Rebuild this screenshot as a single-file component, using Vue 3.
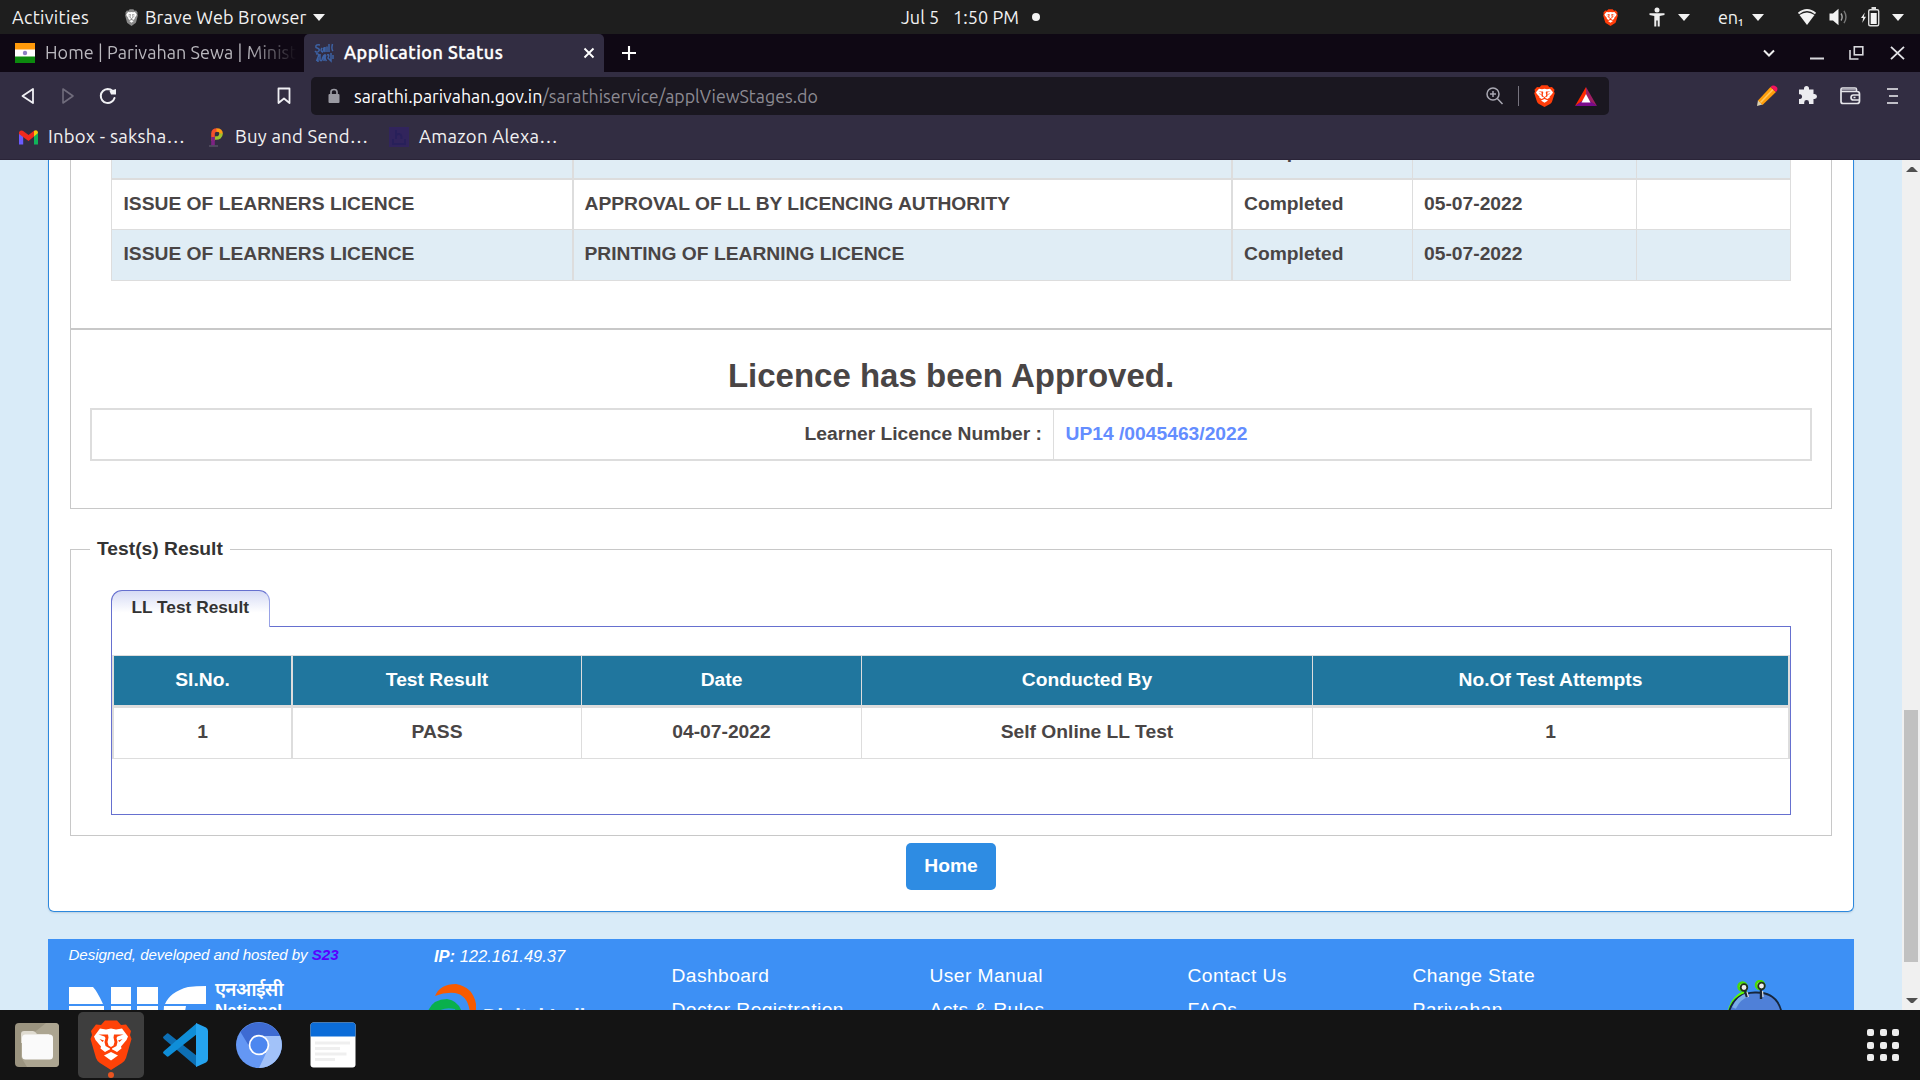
<script setup>
const stages = [
  ['', '', 'Completed', '', ''],
  ['ISSUE OF LEARNERS LICENCE', 'APPROVAL OF LL BY LICENCING AUTHORITY', 'Completed', '05-07-2022', ''],
  ['ISSUE OF LEARNERS LICENCE', 'PRINTING OF LEARNING LICENCE', 'Completed', '05-07-2022', ''],
]
const testHead = ['Sl.No.', 'Test Result', 'Date', 'Conducted By', 'No.Of Test Attempts']
const testRow = ['1', 'PASS', '04-07-2022', 'Self Online LL Test', '1']
const links = [
  ['Dashboard', 'Doctor Registration'],
  ['User Manual', 'Acts & Rules'],
  ['Contact Us', 'FAQs'],
  ['Change State', 'Parivahan'],
]
</script>

<template>
  <div class="screen">
    <svg class="defs" width="0" height="0" aria-hidden="true">
      <symbol id="lion" viewBox="0 0 42 50" preserveAspectRatio="none">
        <path fill="currentColor" d="M11 5 15 0.5H27L31 5 36 4.5 41 11 40 15 41.5 19 36 38Q35 41 32 43L21 50 10 43Q7 41 6 38L.5 19 2 15 1 11 6 4.5Z" />
        <path class="lion-face" d="M10 8.5 16 9.5 21 8.5 26 9.5 32 8.5 38 16.5 36.5 20 31 26.5 31.500 28.500 27 32 22.500 29.500H19.500L15 32 10.500 28.500 11 26.500 5.500 20 4 16.500Z" />
        <path class="lion-face" d="M21 32 28 35.500 21 40.500 14 35.500Z" />
        <path fill="currentColor" d="M8.500 14.500 18 14.500 18.500 17.500 17.500 22 18.500 25.500 21 27 23.500 25.500 24.500 22 23.500 17.500 24 14.500 33.500 14.500 27.500 16.500 26.500 18 27.500 22 26.500 26 22 28.500V31H20V28.500L15.500 26 14.500 22 15.500 18 14.500 16.500ZM9.500 19 14 20.500 12.500 22ZM32.500 19 28 20.500 29.500 22Z" />
      </symbol>
    </svg>

    <header class="sysbar">
      <div class="sys-left">
        <span class="activities">Activities</span>
        <svg class="lion grey" width="13" height="17"><use href="#lion" /></svg>
        <span class="appname">Brave Web Browser</span>
        <i class="tri"></i>
      </div>
      <div class="sys-mid">
        <span class="day">Jul 5</span><span class="time">1:50 PM</span><i class="dot"></i>
      </div>
      <div class="sys-right">
        <svg class="lion red i-brave" width="15" height="17"><use href="#lion" /></svg>
        <svg class="i-acc" width="16" height="20" viewBox="0 0 16 20" fill="#eee"><circle cx="8" cy="3" r="2.500" /><path d="M0.500 6.200H15.500V8L10.700 9V19.500H8.700V13.500H7.300V19.500H5.300V9L.5 8Z" /></svg>
        <i class="tri t1"></i>
        <span class="lang">en₁</span>
        <i class="tri t2"></i>
        <svg class="i-wifi" width="20" height="18" viewBox="0 0 20 18"><path d="M1.500 5.500Q10-1.500 18.500 5.500" fill="none" stroke="#eee" stroke-width="1.800" /><path d="M2.500 7Q10 2 17.500 7L10 17Z" fill="#f2f2f2" /></svg>
        <svg class="i-vol" width="20" height="18" viewBox="0 0 20 18"><path d="M.5 5.500H4L9.500.8V17.200L4 12.500H.5Z" fill="#f2f2f2" /><path d="M12 5.500Q14.300 9 12 12.500" fill="none" stroke="#aaa" stroke-width="1.400" /><path d="M15 2.800Q19 9 15 15.200" fill="none" stroke="#777" stroke-width="1.400" /></svg>
        <svg class="i-bat" width="19" height="20" viewBox="0 0 19 20"><path d="M3.800 5.500 0 11H2.200L1.200 16 5 9.700H2.800Z" fill="#eee" /><rect x="7.700" y="2.700" width="10" height="16" rx="1.500" fill="none" stroke="#ddd" stroke-width="1.400" /><rect x="10.500" y="0" width="4.500" height="2.500" fill="#ddd" /><rect x="9.700" y="6" width="6" height="11" fill="#f4f4f4" /></svg>
        <i class="tri t3"></i>
      </div>
    </header>

    <div class="tabstrip">
      <div class="tab idle">
        <svg width="20" height="20"><rect width="20" height="7" fill="#ff9a0a" /><rect y="6.500" width="20" height="7.500" fill="#fff" /><rect y="13.500" width="20" height="6.500" fill="#0c8a0e" /><circle cx="10" cy="10" r="2.200" fill="#8d7fc4" /></svg>
        <span>Home | Parivahan Sewa | Ministry</span>
      </div>
      <div class="tab active">
        <svg width="20" height="20" viewBox="0 0 20 20" fill="none" stroke="#3d62a4" stroke-width="1.500"><path d="M6 2Q1 1 2 4.500 7 6 4.500 8.500 2.500 10 1 8M8 5Q6 8 8.500 9 10.500 7 9.500 4.500L11 9V4M13 9V3.500M15 1V9M18.500 1Q17 6 19 8M2 11Q5 10 4.500 13L2.500 18M6 11V17Q8 19 8.500 15L10 12V18M12 12Q10 15 12.500 18M13 12Q16 11 14 15L17 18V10M11 11V14M19 12V16M4 15V19" /></svg>
        <span>Application Status</span>
        <svg class="close" width="12" height="12" viewBox="0 0 12 12"><path d="M1.500 1.500 10.500 10.500M10.500 1.500 1.500 10.500" stroke="#fff" stroke-width="1.900" /></svg>
      </div>
      <svg class="plus" width="16" height="16" viewBox="0 0 16 16"><path d="M8 1V15M1 8H15" stroke="#fff" stroke-width="2.100" /></svg>
      <div class="winctl">
        <svg width="12" height="14" viewBox="0 0 12 14"><path d="M1 4.500 6 9.500 11 4.500" fill="none" stroke="#eee" stroke-width="2" /></svg>
        <svg width="14" height="14"><path d="M0 12.500H14" stroke="#d8d8dc" stroke-width="2" /></svg>
        <svg width="15" height="14" fill="none" stroke="#d8d8dc" stroke-width="1.600"><rect x="5.300" y=".8" width="8.500" height="8" /><path d="M1 4V13H9.500" /></svg>
        <svg width="15" height="14"><path d="M1 .8 14 13.200M14 .8 1 13.200" stroke="#e4e4e8" stroke-width="1.800" /></svg>
      </div>
    </div>

    <div class="toolbar">
      <div class="navrow">
        <svg class="n-back" width="15" height="18"><path d="M13 2V16L2.500 9Z" fill="none" stroke="#f0f0f4" stroke-width="1.800" stroke-linejoin="round" /></svg>
        <svg class="n-fwd" width="15" height="18"><path d="M2 2V16L12 9Z" fill="none" stroke="#706c7c" stroke-width="1.600" stroke-linejoin="round" /></svg>
        <svg class="n-rel" width="19" height="18"><path d="M13.800 4Q11.500 2 8.500 2A7 7 0 1 0 15.500 11" fill="none" stroke="#f0f0f4" stroke-width="2" stroke-linecap="round" /><path d="M10.500 4 17 2V7.500H12Z" fill="#f0f0f4" /></svg>
        <svg class="n-book" width="14" height="18"><path d="M1.500 1.500H12.500V16L7 11.500 1.500 16Z" fill="none" stroke="#f0f0f4" stroke-width="1.800" stroke-linejoin="round" /></svg>
        <div class="urlbar">
          <svg class="u-lock" width="12" height="16"><rect x=".5" y="6" width="11" height="9" rx="1" fill="#9a9aa2" /><path d="M3 7V4Q3 1.500 6 1.500T9 4V7" fill="none" stroke="#9a9aa2" stroke-width="1.700" /></svg>
          <span class="url"><b>sarathi.parivahan.gov.in</b><span>/sarathiservice/applViewStages.do</span></span>
          <svg class="u-zoom" width="18" height="18" fill="none" stroke="#a9a8b2" stroke-width="1.500"><circle cx="7" cy="7" r="6" /><path d="M11.300 11.500 16.500 17M7 4V10M4 7H10" /></svg>
          <i class="u-sep"></i>
          <svg class="lion red" width="21" height="22"><use href="#lion" /></svg>
          <svg class="u-bat" width="22" height="19" viewBox="0 0 22 19"><path d="M11 0 0 19 11 12Z" fill="#ff2a00" /><path d="M11 0 22 19 11 12Z" fill="#9e1f63" /><path d="M0 19H22L11 11Z" fill="#7a0a8c" /><path d="M11 7 6.500 15.500H15.500Z" fill="#fff" /></svg>
        </div>
        <div class="exts">
          <svg width="22" height="22" viewBox="0 0 22 22"><path d="M1 21 2 15 6.500 19.500Z" fill="#d8d0b0" /><path d="M2 15.500 14.500 2 20 7 6.500 20Z" fill="#ff9d0a" /><path d="M4.500 17.500 17 4.500" stroke="#ffc860" stroke-width="1.600" /><path d="M14.500 2Q17-.5 20 1.500T20 7Z" fill="#f4145c" /></svg>
          <svg width="20" height="20" viewBox="0 0 20 20" fill="#ececf0"><path d="M1 4.500H6V3.500A2.500 2.500 0 0 1 11 3.500V4.500H15.500V9H16.500A2.400 2.400 0 0 1 16.500 14H15.500V19H11V17.500A2.400 2.400 0 0 0 6.200 17.500V19H1V14H2.200A2.400 2.400 0 0 0 2.200 9.300H1Z" /></svg>
          <svg width="21" height="18" viewBox="0 0 21 18" fill="none" stroke="#e6e6ea" stroke-width="1.700"><path d="M16.500 5V2.500Q16.500 1 15 1H2.500Q1 1 1 2.500V14.500Q1 16.500 3 16.500H17Q19.500 16.500 19.500 14V7Q19.500 4.500 17 4.500H1.500M19.500 8H13.500Q11 8 11 10.500T13.500 13H19.500M13.500 10.500H15.500" /><path d="M2 2.500H16" stroke="#9d9aa8" /></svg>
          <svg width="12" height="18"><path d="M0 2H11M2 9H11M0 16H11" stroke="#f0f0f4" stroke-width="1.700" /></svg>
        </div>
      </div>
      <div class="bookmarks">
        <svg class="b1" width="19" height="15" viewBox="0 0 19 15"><path d="M0 2V14.500H4.200V6Z" fill="#6b5bff" /><path d="M15 6V14.500H19V2Z" fill="#10b45a" /><path d="M0 2.200Q1-.5 3.800.8L9.500 5 15 .8V6.500L9.500 11 0 4Z" fill="#f02b1d" /><path d="M15 .8Q19-.8 19 3L15 6.500Z" fill="#fbc80a" /></svg>
        <span class="bt1">Inbox - saksha…</span>
        <svg class="b2" width="15" height="19" viewBox="0 0 15 19" fill="none" stroke-width="3.600"><path d="M4 13V5.500Q4 2 8 2" stroke="#f4502c" /><path d="M7.500 2Q12.500 2 12 6" stroke="#ff9b12" /><path d="M12 5.500Q12 10.500 6 10" stroke="#9ec22d" /><path d="M4 9V17.500" stroke="#7d2284" /><path d="M0 18H9" stroke="#575264" stroke-width="1.500" /></svg>
        <span class="bt2">Buy and Send…</span>
        <svg class="b3" width="20" height="20"><rect width="20" height="20" fill="#31245c" /><path d="M7 3V12M7 8Q13 5 12.500 12M4 12V17H16V12" fill="none" stroke="#28205a" stroke-width="2" /></svg>
        <span class="bt3">Amazon Alexa…</span>
      </div>
    </div>

    <div class="viewport">
      <main class="page">
        <section class="card">
          <div class="box stages-box">
            <div class="stages">
              <div v-for="(row, r) in stages" :key="r" class="srow" :class="'s' + r">
                <div v-for="(c, i) in row" :key="i">{{ c }}</div>
              </div>
            </div>
          </div>
          <div class="box approved">
            <h1>Licence has been Approved.</h1>
            <div class="licence">
              <div class="l-key">Learner Licence Number :</div>
              <div class="l-val">UP14 /0045463/2022</div>
            </div>
          </div>
          <div class="box results">
            <div class="legend">Test(s) Result</div>
            <div class="lltab">LL Test Result</div>
            <div class="panel">
              <div class="trow thead"><div v-for="c in testHead" :key="c">{{ c }}</div></div>
              <div class="trow tbody"><div v-for="(c, i) in testRow" :key="i">{{ c }}</div></div>
            </div>
          </div>
          <button class="home">Home</button>
        </section>

        <footer class="footer">
          <div class="f-nic">
            <p>Designed, developed and hosted by <b>S23</b></p>
            <div class="nic">
              <svg width="137" height="36" viewBox="0 0 137 36" fill="#fff"><path d="M0 1H24Q28 5 34 18H0ZM42 1H62V18H42ZM68 1H89V18H68ZM137 0V18H96Q101 6 119 1 127 0 137 0Z" /><path d="M0 20H35V36H0ZM42 20H62V36H42ZM68 20H89V36H68ZM95 20H117L114 36H94Z" /></svg>
              <div class="nic-text"><span class="hi">एनआईसी</span><span class="en">National</span></div>
            </div>
          </div>
          <div class="f-ip">
            <p><b>IP:</b> 122.161.49.37</p>
            <div class="digital">
              <svg width="48" height="40" viewBox="0 0 48 40"><path d="M7 12Q12 0 28 0 45 3 48 20V40H42Q44 12 27 9 17 8 7 12Z" fill="#f85a00" /><path d="M0 27Q5 15 19 15 33 17 35 34L0 38Z" fill="#09b04c" /><path d="M7 30Q15 22 27 25L31 38H2Z" fill="#2696cf" /></svg>
              <span>Digital India</span>
            </div>
          </div>
          <nav v-for="(col, i) in links" :key="i" class="f-col" :class="'c' + i">
            <a v-for="l in col" :key="l">{{ l }}</a>
          </nav>
          <svg class="bug" width="60" height="50" viewBox="0 0 60 50"><path d="M3 50Q2 18 22 12" fill="none" stroke="#5bff00" stroke-width="4" /><path d="M4 50V32Q9 13 30 12.500T56 30V50Z" fill="#4f80d8" stroke="#17263c" stroke-width="1.800" /><path d="M9 28Q14 17 23 15" fill="none" stroke="#79abe8" stroke-width="4" /><circle cx="17.500" cy="6.500" r="4" fill="#cfe8a0" stroke="#49dc08" stroke-width="2.500" /><circle cx="19" cy="7.500" r="3.300" fill="#eee" stroke="#22301a" stroke-width="1.800" /><circle cx="35" cy="5" r="4" fill="#cfe8a0" stroke="#49dc08" stroke-width="2.500" /><circle cx="36.500" cy="6" r="3.300" fill="#eee" stroke="#22301a" stroke-width="1.800" /><path d="M20 11 22 17M36 9.500V19" stroke="#1c2533" stroke-width="2.400" /><path d="M22 12 23.500 17M37.500 11 38 17" stroke="#ddd" stroke-width="1.200" /></svg>
        </footer>
      </main>
      <aside class="scroll">
        <i class="up"></i>
        <div class="thumb"></div>
        <i class="down"></i>
      </aside>
    </div>

    <div class="dock">
      <svg class="d-files" width="44" height="44" viewBox="0 0 44 44"><rect width="44" height="44" rx="4" fill="#9a937f" /><path d="M31 0H40Q44 0 44 4V40Q44 44 40 44H12L6 34V20Z" fill="#aca591" /><path d="M6 34V11Q6 8 9 8H18Q20 8 22 11H34V20H6Z" fill="#dfdbd0" /><rect x="7" y="11.500" width="31" height="25" rx="3.500" fill="#fafafa" /></svg>
      <div class="d-brave"><svg class="lion flame" width="42" height="50"><use href="#lion" /></svg><i></i></div>
      <svg class="d-code" width="45" height="44" viewBox="0 0 45 44"><path d="M0 14 4 10.500Q5 10 6 11L34 33V44L1 16Q0 15 0 14Z" fill="#0d6fb4" /><path d="M0 30 4 33.500Q5 34 6 33L34 11V0L1 28Q0 29 0 30Z" fill="#0f8ed8" /><path d="M33 0 43 4.500Q45 5.500 45 8V36Q45 38.500 43 39.500L33 44Z" fill="#25a4f0" /></svg>
      <svg class="d-chr" width="46" height="46" viewBox="0 0 46 46"><circle cx="23" cy="23" r="23" fill="#6497f4" /><path d="M4.500 10A23 23 0 0 1 44 14H23Q15 14 13 24Z" fill="#3e6bd2" /><path d="M44 14A23 23 0 0 1 23 46L32 27Q35 19 28 14Z" fill="#a2c2f9" /><circle cx="23" cy="23" r="10.300" fill="#fff" /><circle cx="23" cy="23" r="8.600" fill="#4c87f0" /></svg>
      <svg class="d-doc" width="46" height="46" viewBox="0 0 46 46"><rect x=".5" y=".5" width="45" height="45" rx="3" fill="#fff" /><path d="M.5 14.500V3.500Q.5.500 3.500.500H42.500Q45.500.5 45.500 3.500V14.500Z" fill="#0b6cd8" /><path d="M5 21H40M5 26.500H30M5 32H36.500M5 37.500H25" stroke="#efefef" stroke-width="3.200" /></svg>
      <div class="apps"><i v-for="n in 9" :key="n"></i></div>
    </div>
  </div>
</template>

<style>
body { margin: 0; overflow: hidden; background: #141414; }
</style>

<style scoped>
* { box-sizing: border-box; }
svg { display: block; flex: none; }
i { display: block; flex: none; }
.defs { position: absolute; }
.screen { width: 1920px; height: 1080px; overflow: hidden; display: flex; flex-direction: column; font-family: Ubuntu, "Noto Sans", sans-serif; color: #f2f2f2; }
.lion { color: #fb4a0c; --face: #fff; }
.lion-face { fill: var(--face); }
.lion.grey { color: #8a8a8a; }
.lion.red { color: #ff3d0a; }
.lion.flame { color: #ff4208; }

.sysbar { height: 34px; background: #1e1e1e; display: flex; font-size: 18px; line-height: 34px; white-space: nowrap; }
.sysbar > div { display: flex; align-items: center; }
.sys-left { width: 901px; padding-left: 12px; }
.activities { width: 113px; letter-spacing: 0.32px; }
.appname { width: 168px; margin-left: 7px; letter-spacing: 0.18px; }
.tri { border: 6px solid transparent; border-top: 7px solid #f2f2f2; border-bottom: 0; }
.sys-mid { width: 702px; }
.day { width: 52px; letter-spacing: 0; margin-top: -1px; }
.time { width: 79px; letter-spacing: 0.1px; margin-top: -1px; }
.dot { width: 8px; height: 8px; border-radius: 50%; background: #f2f2f2; }
.i-acc { margin-left: 31px; }
.t1 { margin-left: 13px; }
.lang { width: 34px; margin-left: 28px; letter-spacing: -0.3px; }
.i-wifi { margin-left: 33px; }
.i-vol { margin-left: 12px; }
.i-bat { margin-left: 12px; margin-top: -1px; }
.t3 { margin-left: 12px; }

.tabstrip { height: 38px; background: #0f0814; display: flex; align-items: center; font-size: 18px; white-space: nowrap; }
.tab { height: 38px; display: flex; align-items: center; }
.tab span { margin-top: -2px; }
.idle { width: 304px; padding-left: 15px; color: #b9b7bd; }
.idle span { width: 254px; margin-left: 10px; overflow: hidden; letter-spacing: 0.06px; -webkit-mask-image: linear-gradient(90deg, #000 80%, transparent 99%); mask-image: linear-gradient(90deg, #000 80%, transparent 99%); }
.active { width: 300px; padding-left: 10px; background: #322d42; border-radius: 5px 5px 0 0; color: #fff; font-weight: 500; }
.active span { width: 240px; margin-left: 10px; letter-spacing: 0.48px; -webkit-text-stroke: 0.35px #fff; }
.close { margin-left: -1px; }
.plus { margin-left: 17px; }
.winctl { margin-left: auto; margin-right: 15px; display: flex; align-items: center; }
.winctl svg:nth-child(2) { margin-left: 35px; }
.winctl svg:nth-child(3) { margin-left: 25px; }
.winctl svg:nth-child(4) { margin-left: 26px; }

.toolbar { height: 88px; background: #322d42; border-bottom: 1px solid #2a2438; }
.navrow { height: 48px; display: flex; align-items: center; padding-left: 20px; }
.n-fwd { margin-left: 26px; }
.n-rel { margin-left: 23px; }
.n-book { margin-left: 159px; }
.urlbar { width: 1298px; height: 38px; margin-left: 20px; background: #1a1720; border-radius: 5px; display: flex; align-items: center; padding-left: 17px; }
.url { width: 1129px; margin: -1px 0 0 14px; font-size: 17.8px; white-space: nowrap; color: #8d8b93; }
.url b { font-weight: 400; color: #fff; }
.u-zoom { margin-left: 3px; }
.u-sep { width: 1px; height: 20px; background: #77747f; margin: 0 15px 0 14px; }
.u-bat { margin-left: 20px; }
.exts { display: flex; align-items: center; margin-left: 147px; }
.exts svg:nth-child(2) { margin-left: 20px; margin-top: -2px; }
.exts svg:nth-child(3) { margin-left: 22px; }
.exts svg:nth-child(4) { margin-left: 26px; }
.bookmarks { height: 34px; display: flex; align-items: center; padding-left: 19px; font-size: 18.5px; letter-spacing: 0.25px; white-space: nowrap; }
.bookmarks span { margin-top: -2px; }
.bookmarks .bt1 { width: 161px; margin-left: 10px; }
.bookmarks .bt2 { width: 154px; margin-left: 11px; }
.bookmarks .bt3 { margin-left: 10px; }

.viewport { height: 850px; display: flex; background: #d9ebf8; overflow: hidden; font-family: "Liberation Sans", Arial, sans-serif; }
.page { width: 1902px; height: 850px; overflow: hidden; padding-left: 48px; }
.card { width: 1806px; height: 752px; background: #fff; border: 1px solid #2d88dd; border-top: 0; border-radius: 0 0 6px 6px; padding: 0 21px; font-size: 19.25px; line-height: 22px; font-weight: 700; color: #494545; overflow: hidden; box-shadow: 0 1px 2px #b9cfe0; }
.box { border: 1px solid #c8c8c8; width: 1762px; }
.stages-box { height: 169px; border-top: 0; padding-left: 40px; overflow: hidden; }
.stages { width: 1680px; margin-top: -32px; border: 1px solid #ddd; border-top: 0; }
.srow { display: grid; grid-template-columns: 460px 659px 181px 224px 154px; height: 50px; background: #e0edf5; }
.srow > div { padding: 13px 0 0 11px; border-left: 1px solid #ddd; white-space: nowrap; }
.srow > div:first-child { border-left: 0; padding-left: 11.5px; }
.srow > div:nth-child(2) { border-left-width: 2px; padding-left: 10.5px; }
.srow > div:nth-child(3) { border-left-width: 2px; }
.s1 { background: #fff; border-top: 2px solid #ddd; border-bottom: 1px solid #ddd; height: 52px; }
.approved { height: 180px; padding: 27px 0 0 19px; }
.approved h1 { margin: 0 0 13px; width: 1722px; text-align: center; font-size: 33px; line-height: 38px; }
.licence { width: 1722px; height: 53px; border: 2px solid #ddd; display: flex; }
.l-key { width: 961px; text-align: right; padding: 13px 11px 0 0; }
.l-val { flex: 1; padding: 13px 0 0 11.5px; border-left: 1px solid #ddd; color: #648dff; }
.results { height: 287px; margin-top: 40px; padding: 0 0 0 40px; }
.legend { width: 140px; height: 22px; margin: -12px 0 30px -21px; padding-left: 7px; background: #fff; color: #333; }
.lltab { position: relative; width: 159px; height: 37px; margin-bottom: -1px; border: 1px solid #6670cf; border-right-color: #98a2e6; border-bottom: 0; border-radius: 11px 11px 0 0; padding: 6px 0 0 19.5px; font-size: 17.3px; line-height: 20px; color: #333; background: linear-gradient(#d6dbf5, #fff 60%); }
.panel { width: 1680px; height: 189px; border: 1px solid #6670cf; padding-top: 28px; }
.trow { display: grid; grid-template-columns: 179px 290px 280px 451px 478px; text-align: center; }
.trow > div { border-left: 1px solid #ddd; padding-top: 13px; }
.trow > div:nth-child(-n + 2) { border-left-width: 2px; }
.trow > div:last-child { border-right: 2px solid #ddd; }
.thead { height: 53px; border-top: 1px solid #ddd; border-bottom: 3px solid #ddd; color: #fff; }
.thead > div { background: #20769e; }
.tbody { height: 51px; border-bottom: 1px solid #ddd; }
.home { display: block; width: 90px; height: 47px; margin: 7px auto 0; border: 0; border-radius: 5px; background: #2e8ce3; color: #fff; font: 700 19.25px/22px "Liberation Sans", Arial, sans-serif; padding: 0 0 2px; }

.footer { width: 1806px; height: 120px; margin-top: 27px; background: #3d90f5; display: flex; overflow: hidden; color: #fff; white-space: nowrap; }
.footer p { margin: 0; font-style: italic; }
.f-nic { width: 364px; padding: 7px 0 0 20.5px; }
.f-nic p { font-size: 15.125px; line-height: 18px; letter-spacing: -0.06px; }
.f-nic p b { color: #5a00ff; }
.nic { display: flex; margin: 22px 0 0 0.5px; }
.nic-text { display: flex; flex-direction: column; margin: -5px 0 0 9px; font-weight: 700; }
.hi { font: 600 19px/21px "Noto Sans Devanagari", "Noto Sans", sans-serif; height: 21px; letter-spacing: -0.8px; }
.en { font-size: 17px; line-height: 18px; }
.f-ip { width: 259.5px; padding: 8px 0 0 22px; }
.f-ip p { font-size: 16.5px; line-height: 18px; }
.digital { display: flex; margin: 19px 0 0 -6px; }
.digital span { margin: 20px 0 0 7px; font-size: 20px; line-height: 24px; font-weight: 700; color: #e4f0fd; }
.f-col { display: flex; flex-direction: column; padding-top: 20px; font-size: 19.25px; line-height: 34px; letter-spacing: 0.4px; }
.c0, .c1 { width: 258px; }
.c2 { width: 225px; }
.c3 { width: 312px; }
.bug { margin-top: 41px; }

.scroll { width: 18px; background: #f0f0f0; padding: 7px 2px 0; }
.up { border: 5px solid transparent; border-top: 0; border-bottom-color: #505050; margin-left: 2px; }
.thumb { height: 252px; margin: 538px 0 36px; background: #c1c1c1; width: 14px; }
.down { border: 5px solid transparent; border-bottom: 0; border-top-color: #505050; margin-left: 2px; }

.dock { height: 70px; background: #141414; display: flex; align-items: center; padding-left: 15px; }
.d-brave { width: 66px; height: 66px; margin-left: 19px; border-radius: 5px; background: #3e3e3e; display: flex; flex-direction: column; align-items: center; padding-top: 8px; }
.d-brave i { width: 6px; height: 6px; border-radius: 50%; background: #e95420; margin-top: 2px; }
.d-code { margin-left: 19px; }
.d-chr { margin-left: 28px; }
.d-doc { margin-left: 28px; }
.apps { margin: 0 21px 0 auto; display: grid; grid-template-columns: repeat(3, 7px); gap: 5.500px; }
.apps i { width: 7px; height: 7px; border-radius: 2px; background: #eee; }
</style>
